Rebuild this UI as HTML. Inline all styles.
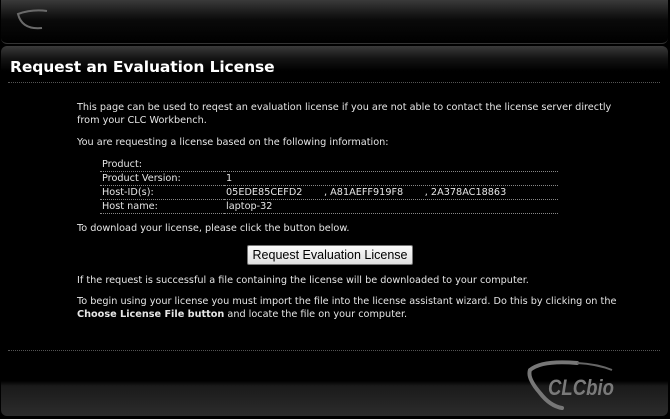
<!DOCTYPE html><html><head><style>
body{margin:0;width:670px;height:419px;background:#000;overflow:hidden;font-family:"DejaVu Sans","Liberation Sans",sans-serif;font-size:9.7px;color:#e6e6e6;position:relative}
.top{position:absolute;left:1px;top:0;width:667px;height:43px;border-radius:0 0 6px 6px;background:linear-gradient(#3a3a3a 0,#1c1c1c 12px,#0a0a0a 20px,#000 43px);border-bottom:1px solid #333}
.panel{position:absolute;left:1px;top:46px;width:667px;height:370px;border-radius:6px 6px 6px 6px;background:linear-gradient(#3a3a3a 0,#151515 12px,#000 25px,#000 335px,#1a1a1a 340px,#2c2c2c 370px)}
h1{position:absolute;left:10px;top:58px;margin:0;font-family:"DejaVu Sans",sans-serif;font-weight:bold;font-size:15.5px;color:#fff;letter-spacing:-0.1px}
.dl{position:absolute;left:8px;width:652px;border-top:1px dotted #555}
.t{position:absolute;left:77px;white-space:nowrap;line-height:13px}
table{position:absolute;left:100px;top:158px;width:458px;border-collapse:collapse}
td{padding:0 0 0 2px;height:13px;border-bottom:1px dotted #888;white-space:nowrap;line-height:13px}
.btn{position:absolute;left:247px;top:245px;width:164px;height:18px;background:linear-gradient(#fafafa,#e0e0e0);border:1px solid #777;border-radius:2px;color:#000;font-family:"Liberation Sans",sans-serif;font-size:12.5px;text-align:center;line-height:18px}
</style></head><body>
<div class="top"></div>
<svg style="position:absolute;left:12px;top:8px" width="40" height="28"><path d="M35 3 Q20 1 6 6 Q10 22 30 20" fill="none" stroke="#6a6a6a" stroke-width="2"/></svg>
<div class="panel"></div>
<h1>Request an Evaluation License</h1>
<div class="dl" style="top:82px"></div>
<div class="t" style="top:101px">This page can be used to reqest an evaluation license if you are not able to contact the license server directly<br>from your CLC Workbench.</div>
<div class="t" style="top:136px">You are requesting a license based on the following information:</div>
<table>
<tr><td style="width:122px">Product:</td><td></td></tr>
<tr><td>Product Version:</td><td>1</td></tr>
<tr><td>Host-ID(s):</td><td>05EDE85CEFD2 &nbsp; &nbsp; &nbsp; , A81AEFF919F8 &nbsp; &nbsp; &nbsp; , 2A378AC18863</td></tr>
<tr><td>Host name:</td><td>laptop-32</td></tr>
</table>
<div class="t" style="top:222px">To download your license, please click the button below.</div>
<div class="btn">Request Evaluation License</div>
<div class="t" style="top:274px">If the request is successful a file containing the license will be downloaded to your computer.</div>
<div class="t" style="top:295px">To begin using your license you must import the file into the license assistant wizard. Do this by clicking on the<br><b>Choose License File button</b> and locate the file on your computer.</div>
<div class="dl" style="top:350px"></div>
<svg style="position:absolute;left:522px;top:358px" width="130" height="55"><path d="M55 5 Q20 2 8 12 Q5 20 18 35 Q28 48 40 50" fill="none" stroke="#777" stroke-width="4" stroke-linecap="round"/><path d="M55 5 Q75 6 90 12" fill="none" stroke="#666" stroke-width="2"/><text x="26" y="37" font-family="Liberation Sans Narrow,Liberation Sans,sans-serif" font-weight="bold" font-style="italic" font-size="22" fill="#7a7a7a" textLength="66" lengthAdjust="spacingAndGlyphs">CLCbio</text></svg>
</body></html>
